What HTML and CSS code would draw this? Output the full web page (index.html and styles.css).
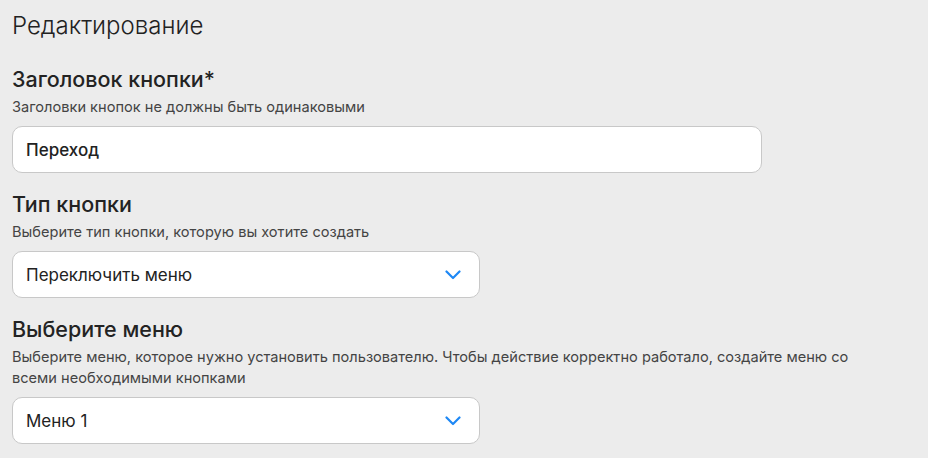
FILE: index.html
```html
<!DOCTYPE html>
<html lang="ru">
<head>
    <meta charset="UTF-8">
    <meta name="viewport" content="width=device-width, initial-scale=1.0">
    <title>Редактирование</title>
    <link rel="stylesheet" href="styles.css">
</head>
<body>
    <div class="editor">
        <h1 class="editor-title">Редактирование</h1>

        <div class="field">
            <label class="field-label" for="btnTitle">Заголовок кнопки*</label>
            <p class="field-hint">Заголовки кнопок не должны быть одинаковыми</p>
            <input class="field-input" id="btnTitle" type="text" value="Переход">
        </div>

        <div class="field">
            <div class="field-label">Тип кнопки</div>
            <p class="field-hint">Выберите тип кнопки, которую вы хотите создать</p>
            <div class="field-select">
                <span>Переключить меню</span>
                <svg class="chevron" width="16" height="10" viewBox="0 0 16 10">
                    <path d="M1.5 1.5 L8 8 L14.5 1.5" fill="none" stroke="#1e88f5" stroke-width="2.2" stroke-linecap="round" stroke-linejoin="round"/>
                </svg>
            </div>
        </div>

        <div class="field">
            <div class="field-label">Выберите меню</div>
            <p class="field-hint">Выберите меню, которое нужно установить пользователю. Чтобы действие корректно работало, создайте меню со всеми необходимыми кнопками</p>
            <div class="field-select">
                <span>Меню 1</span>
                <svg class="chevron" width="16" height="10" viewBox="0 0 16 10">
                    <path d="M1.5 1.5 L8 8 L14.5 1.5" fill="none" stroke="#1e88f5" stroke-width="2.2" stroke-linecap="round" stroke-linejoin="round"/>
                </svg>
            </div>
        </div>
    </div>
</body>
</html>
```

FILE: styles.css
```css
body {
    margin: 0;
    background-color: #ececec;
    font-family: 'Inter', 'Noto Sans', sans-serif;
    color: #222;
}
.editor {
    padding: 10px 12px;
    width: 880px;
}
.editor-title {
    font-size: 24px;
    font-weight: 300;
    margin: 0 0 24px;
    line-height: 32px;
    color: #222;
}
.field {
    margin-bottom: 18px;
}
.field-label {
    display: block;
    font-size: 21.5px;
    font-weight: 500;
    line-height: 26px;
    color: #232323;
}
.field-hint {
    margin: 5px 0 8px;
    font-size: 14.6px;
    line-height: 21px;
    color: #444;
    max-width: 850px;
}
.field-input,
.field-select {
    box-sizing: border-box;
    height: 47px;
    background-color: #fff;
    border: 1px solid #c8c8c8;
    border-radius: 10px;
    font-family: inherit;
    font-size: 17px;
    color: #222;
}
.field-input {
    display: block;
    width: 750px;
    padding: 0 13px;
    font-weight: 500;
    outline: none;
}
.field-select {
    width: 468px;
    display: flex;
    align-items: center;
    justify-content: space-between;
    padding: 0 18px 0 13px;
}
.chevron {
    display: block;
}
```
